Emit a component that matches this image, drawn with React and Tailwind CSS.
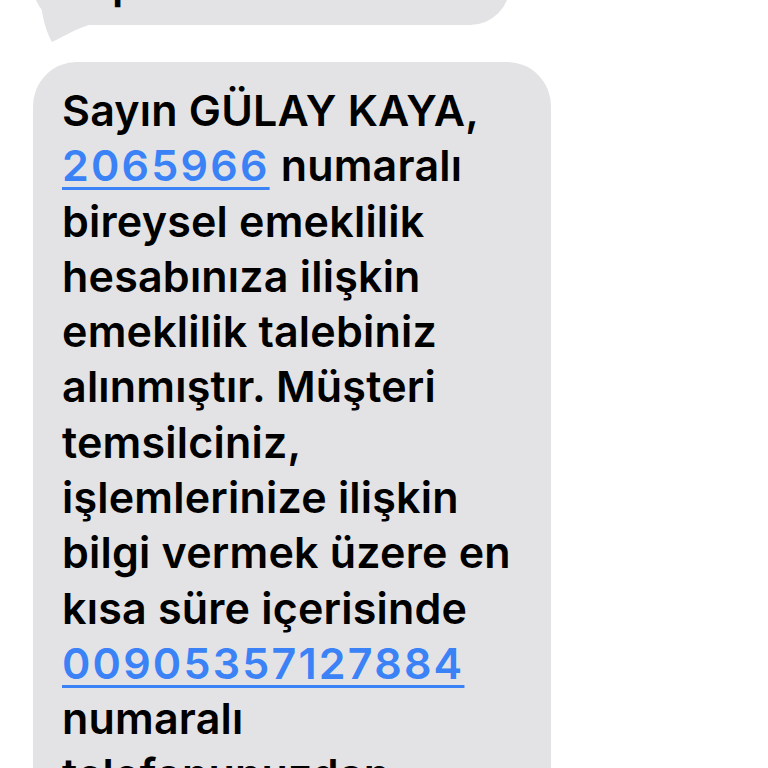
export default function App() {
  const lines = [
    ['Sayın GÜLAY KAYA,'],
    [{ link: '2065966' }, ' numaralı'],
    ['bireysel emeklilik'],
    ['hesabınıza ilişkin'],
    ['emeklilik talebiniz'],
    ['alınmıştır. Müşteri'],
    ['temsilciniz,'],
    ['işlemlerinize ilişkin'],
    ['bilgi vermek üzere en'],
    ['kısa süre içerisinde'],
    [{ link: '00905357127884' }],
    ['numaralı'],
    ['telefonunuzdan'],
  ]

  return (
    <div className="w-[768px] h-[768px] overflow-hidden bg-white font-['Inter',sans-serif] text-black">
      {/* previous message, cut off at the top */}
      <div className="relative ml-[33px] w-[477px] h-[90px] -mt-[65px] bg-[#e3e3e6] rounded-[40px]">
        <div className="pl-[29px] pt-[21px] text-[43px] leading-[55px] font-semibold tracking-[0.2px]">yapılacaktır.</div>
        <svg className="absolute left-0 bottom-[-20px]" width="60" height="50" viewBox="0 0 60 50">
          <path d="M7 0 C9 25 14 38 19 47 C30 42 42 34 56 30 L56 0 Z" fill="#e3e3e6" />
        </svg>
      </div>

      <div className="ml-[33px] mt-[37px] w-[518px] bg-[#e3e3e6] rounded-[44px] pl-[29px] pr-[20px] pt-[21px] pb-[30px]">
        {lines.map((parts, i) => (
          <div key={i} className="text-[43px] leading-[55.3px] font-semibold tracking-[0.2px] whitespace-nowrap">
            {parts.map((p, j) =>
              typeof p === 'string' ? (
                <span key={j}>{p}</span>
              ) : (
                <span key={j} className="text-[#3a82f6] tracking-[2.2px] underline decoration-[3px] underline-offset-[6px]">{p.link}</span>
              )
            )}
          </div>
        ))}
      </div>
    </div>
  )
}
